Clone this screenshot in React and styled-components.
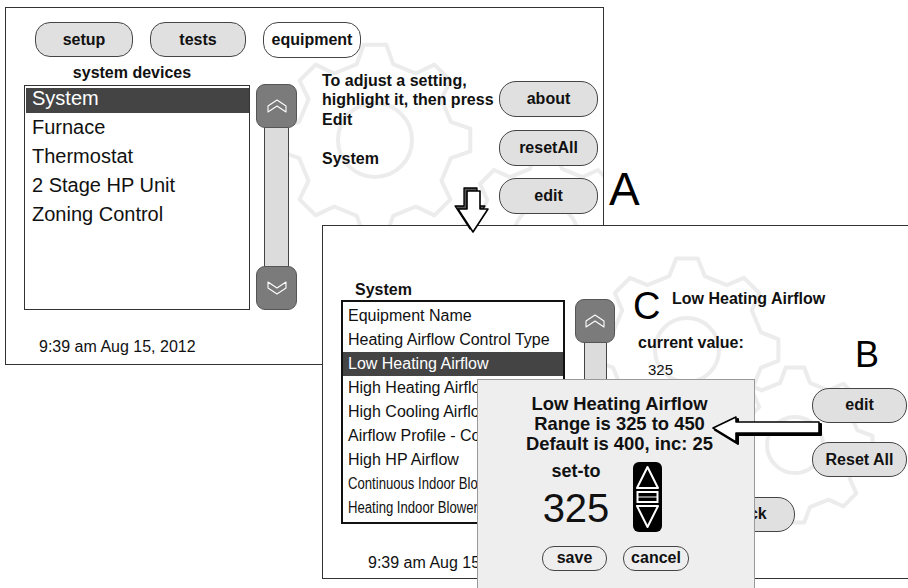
import React from 'react'
import styled, { createGlobalStyle } from 'styled-components'

const GlobalStyle = createGlobalStyle`
  html, body {
    margin: 0;
    padding: 0;
    background: #fff;
    overflow: hidden;
  }
  body {
    font-family: "Liberation Sans", Arial, sans-serif;
    color: #111;
  }
`

const Canvas = styled.div`
  position: relative;
  width: 908px;
  height: 588px;
  overflow: hidden;
  background: #fff;
`

// a thermostat screen, laid over the canvas like a window on a desktop
const Screen = styled.div`
  position: absolute;
  left: ${p => p.$x}px;
  top: ${p => p.$y}px;
  width: ${p => p.$w}px;
  height: ${p => p.$h}px;
  z-index: ${p => p.$z};
  box-sizing: border-box;
  border: 1px solid #333;
  background: #fff;
  overflow: hidden;
  display: flex;
  flex-direction: column;
`

const Watermark = styled.svg`
  position: absolute;
  left: 0;
  top: 0;
  width: 100%;
  height: 100%;
  z-index: -1;
  pointer-events: none;
`

const Pill = styled.div`
  box-sizing: border-box;
  width: ${p => p.$w}px;
  height: ${p => p.$h}px;
  border: 1px solid #454545;
  border-radius: ${p => p.$r || 15}px;
  background: ${p => p.$bg || '#e0e0e0'};
  display: flex;
  align-items: center;
  justify-content: center;
  font-weight: 700;
  font-size: 16px;
  white-space: nowrap;
  grid-column: ${p => p.$col || 'auto'};
  grid-row: ${p => p.$row || 'auto'};
`

const TabRow = styled.div`
  display: flex;
  gap: 17px;
  margin: 14px 0 0 29px;
`

const Body = styled.div`
  display: flex;
  align-items: flex-start;
  margin-top: ${p => p.$top || 0}px;
`

const ListColumn = styled.div`
  margin: ${p => p.$top}px 0 0 18px;
  width: ${p => p.$w}px;
  flex: none;
`

const ListTitle = styled.div`
  font-weight: 700;
  font-size: 16px;
  line-height: 18px;
  text-align: ${p => (p.$center ? 'center' : 'left')};
  padding: ${p => (p.$center ? '0 10px 0 0' : '0 0 0 14px')};
  margin-bottom: ${p => p.$gap}px;
`

const ListBox = styled.div`
  box-sizing: border-box;
  height: ${p => p.$h}px;
  border: ${p => p.$border}px solid ${p => (p.$border > 1 ? '#111' : '#333')};
  padding: 2px 0 0 ${p => (p.$border > 1 ? 0 : 1)}px;
  overflow: hidden;
`

const DeviceItem = styled.div`
  height: 25px;
  margin-bottom: 4px;
  padding-left: 6px;
  font-size: 20px;
  line-height: 21px;
  background: ${p => (p.$selected ? '#444' : 'transparent')};
  color: ${p => (p.$selected ? '#fff' : '#111')};
`

const SettingItem = styled.div`
  height: 24px;
  padding-left: 5px;
  font-size: 16px;
  line-height: 24px;
  white-space: nowrap;
  overflow: hidden;
  background: ${p => (p.$selected ? '#444' : 'transparent')};
  color: ${p => (p.$selected ? '#fff' : '#111')};
`

// the long labels are set in a narrow face on the device
const NarrowText = styled.span`
  display: inline-block;
  transform: scaleX(0.82);
  transform-origin: left center;
`

const ScrollBar = styled.div`
  flex: none;
  margin: ${p => p.$top}px 0 0 ${p => p.$left}px;
  width: ${p => p.$w}px;
  height: 226px;
  display: flex;
  flex-direction: column;
  align-items: center;
`

const ScrollButton = styled.div`
  box-sizing: border-box;
  width: 100%;
  height: 44px;
  flex: none;
  background: #7b7b7b;
  border: 1px solid #555;
  border-radius: 9px;
  display: flex;
  align-items: center;
  justify-content: center;
`

const ScrollTrack = styled.div`
  box-sizing: border-box;
  width: ${p => p.$w}px;
  flex: 1;
  background: #dcdcdc;
  border: 1px solid #444;
  border-top: none;
  border-bottom: none;
`

const Hint = styled.div`
  flex: none;
  width: 177px;
  margin: 6.5px 0 0 25px;
  font-weight: 700;
  font-size: 16px;
  line-height: 19.5px;
  white-space: nowrap;
`

const HintName = styled.div`
  margin-top: 19.5px;
`

const SideButtons = styled.div`
  display: flex;
  flex-direction: column;
  gap: 12.5px;
  margin-top: 17px;
`

const DateLine = styled.div`
  margin-top: ${p => p.$top}px;
  padding-left: ${p => p.$left}px;
  font-size: 16px;
  line-height: 18px;
  white-space: nowrap;
`

const Detail = styled.div`
  display: flex;
  flex-direction: column;
  margin: 63.7px 0 0 23px;
`

const DetailText = styled.div`
  font-weight: ${p => (p.$plain ? 400 : 700)};
  font-size: ${p => (p.$plain ? 15 : 16)}px;
  line-height: 18px;
  margin-top: ${p => p.$top || 0}px;
  padding-left: ${p => p.$indent || 0}px;
  white-space: nowrap;
`

const ActionGrid = styled.div`
  display: grid;
  grid-template-columns: 93px 95px;
  grid-auto-rows: 35px;
  column-gap: 17px;
  row-gap: 19.5px;
  margin: 9.3px 0 0 64px;
`

const Popup = styled.div`
  position: absolute;
  left: 477px;
  top: 379px;
  width: 278px;
  height: 220px;
  z-index: 3;
  box-sizing: border-box;
  background: #eeeeee;
  border: 1px solid #9a9a9a;
  display: flex;
  flex-direction: column;
`

const PopupTitle = styled.div`
  padding: 13.8px 0 0 7px;
  text-align: center;
  font-weight: 700;
  font-size: 18.4px;
  line-height: 20px;
  white-space: nowrap;
`

const PopupMid = styled.div`
  display: flex;
  align-items: flex-start;
  margin-top: 7.2px;
  padding-left: 58px;
`

const ValueStack = styled.div`
  width: 80px;
  display: flex;
  flex-direction: column;
  align-items: center;
`

const SetTo = styled.div`
  font-weight: 700;
  font-size: 18px;
  line-height: 20px;
`

const BigValue = styled.div`
  margin-top: 7.4px;
  font-size: 40px;
  line-height: 40px;
`

const Spinner = styled.svg`
  margin: 1px 0 0 17px;
  flex: none;
`

const PopupButtons = styled.div`
  display: flex;
  gap: 16px;
  margin-top: 14px;
  padding-left: 64px;
`

const Letter = styled.div`
  position: absolute;
  left: ${p => p.$x}px;
  top: ${p => p.$y}px;
  z-index: 5;
  font-size: ${p => p.$size}px;
  line-height: ${p => p.$size}px;
  color: #000;
`

const Overlay = styled.svg`
  position: absolute;
  left: ${p => p.$x}px;
  top: ${p => p.$y}px;
  z-index: 4;
  overflow: visible;
`

const gearPath = (cx, cy, ro, ri, n) => {
  const s = (Math.PI * 2) / n
  const pts = []
  for (let i = 0; i < n; i++) {
    const a = i * s - Math.PI / 2
    ;[[a - s * 0.3, ri], [a - s * 0.15, ro], [a + s * 0.15, ro], [a + s * 0.3, ri]].forEach(([t, r]) => {
      pts.push(`${(cx + r * Math.cos(t)).toFixed(1)},${(cy + r * Math.sin(t)).toFixed(1)}`)
    })
  }
  return `M${pts.join(' L')} Z`
}

const Gear = ({ cx, cy, ro, ri, hole }) => (
  <g fill="none" stroke="#ececec" strokeWidth="4" strokeLinejoin="round">
    <path d={gearPath(cx, cy, ro, ri, 8)} />
    <circle cx={cx} cy={cy} r={hole} />
  </g>
)

const Chevron = ({ down }) => (
  <svg width="20" height="14" viewBox="0 0 20 14">
    <polygon
      points={down ? '1,1 1,7 10,13 19,7 19,1 10,7' : '1,13 1,7 10,1 19,7 19,13 10,7'}
      fill="none"
      stroke="#fff"
      strokeWidth="1.1"
      strokeLinejoin="round"
    />
  </svg>
)

const Scroller = ({ top, left, w, track }) => (
  <ScrollBar $top={top} $left={left} $w={w}>
    <ScrollButton><Chevron /></ScrollButton>
    <ScrollTrack $w={track} />
    <ScrollButton><Chevron down /></ScrollButton>
  </ScrollBar>
)

const devices = ['System', 'Furnace', 'Thermostat', '2 Stage HP Unit', 'Zoning Control']

const settings = [
  { label: 'Equipment Name' },
  { label: 'Heating Airflow Control Type' },
  { label: 'Low Heating Airflow', selected: true },
  { label: 'High Heating Airflow' },
  { label: 'High Cooling Airflow' },
  { label: 'Airflow Profile - Comfort' },
  { label: 'High HP Airflow' },
  { label: 'Continuous Indoor Blower Airflow', narrow: true },
  { label: 'Heating Indoor Blower Off Delay', narrow: true },
]

export default function App() {
  return (
    <Canvas>
      <GlobalStyle />

      <Screen $x={5} $y={7} $w={599} $h={358} $z={1}>
        <Watermark>
          <Gear cx={369} cy={132} ro={96} ri={78} hole={37} />
          <Gear cx={540} cy={228} ro={84} ri={69} hole={32} />
        </Watermark>
        <TabRow>
          <Pill $w={98} $h={35}>setup</Pill>
          <Pill $w={96} $h={35}>tests</Pill>
          <Pill $w={98} $h={36} $bg="#fff">equipment</Pill>
        </TabRow>
        <Body $top={6}>
          <ListColumn $top={0} $w={226}>
            <ListTitle $center $gap={3}>system devices</ListTitle>
            <ListBox $h={225} $border={1}>
              {devices.map((d, i) => (
                <DeviceItem key={d} $selected={i === 0}>{d}</DeviceItem>
              ))}
            </ListBox>
          </ListColumn>
          <Scroller top={20} left={6} w={41} track={25} />
          <Hint>
            To adjust a setting,<br />
            highlight it, then press<br />
            Edit
            <HintName>System</HintName>
          </Hint>
          <SideButtons>
            <Pill $w={99} $h={36} $r={17}>about</Pill>
            <Pill $w={99} $h={36} $r={17}>resetAll</Pill>
            <Pill $w={99} $h={36} $r={17}>edit</Pill>
          </SideButtons>
        </Body>
        <DateLine $top={27.7} $left={33}>9:39 am Aug 15, 2012</DateLine>
      </Screen>

      <Screen $x={322} $y={225} $w={620} $h={354} $z={2}>
        <Watermark>
          <Gear cx={364} cy={124} ro={92} ri={76} hole={32} />
          <Gear cx={472} cy={219} ro={78} ri={64} hole={28} />
        </Watermark>
        <Body>
          <ListColumn $top={54.7} $w={224}>
            <ListTitle $gap={1.3}>System</ListTitle>
            <ListBox $h={224} $border={2}>
              {settings.map(s => (
                <SettingItem key={s.label} $selected={s.selected}>
                  {s.narrow ? <NarrowText>{s.label}</NarrowText> : s.label}
                </SettingItem>
              ))}
            </ListBox>
          </ListColumn>
          <Scroller top={73} left={10} w={40} track={23} />
          <Detail>
            <DetailText $indent={34}>Low Heating Airflow</DetailText>
            <DetailText $top={26}>current value:</DetailText>
            <DetailText $top={9} $indent={10} $plain>325</DetailText>
            <ActionGrid>
              <Pill $w={95} $h={35} $r={17} $col={2} $row={1}>edit</Pill>
              <Pill $w={95} $h={35} $r={17} $col={2} $row={2}>Reset All</Pill>
              <Pill $w={93} $h={35} $r={17} $col={1} $row={3}>back</Pill>
            </ActionGrid>
          </Detail>
        </Body>
        <DateLine $top={21.7} $left={45}>9:39 am Aug 15, 2012</DateLine>
      </Screen>

      <Popup>
        <PopupTitle>
          Low Heating Airflow<br />
          Range is 325 to 450<br />
          Default is 400, inc: 25
        </PopupTitle>
        <PopupMid>
          <ValueStack>
            <SetTo>set-to</SetTo>
            <BigValue>325</BigValue>
          </ValueStack>
          <Spinner width="29" height="70" viewBox="0 0 29 70">
            <rect x="0" y="0" width="29" height="70" rx="6" fill="#000" />
            <polygon points="14.5,5 4,26 25,26" fill="none" stroke="#fff" strokeWidth="2" strokeLinejoin="round" />
            <rect x="4.5" y="30" width="20" height="10" fill="none" stroke="#fff" strokeWidth="2" />
            <line x1="4.5" y1="35" x2="24.5" y2="35" stroke="#fff" strokeWidth="1" />
            <polygon points="4,44 25,44 14.5,65" fill="none" stroke="#fff" strokeWidth="2" strokeLinejoin="round" />
          </Spinner>
        </PopupMid>
        <PopupButtons>
          <Pill $w={65} $h={25} $r={12} $bg="#eeeeee">save</Pill>
          <Pill $w={66} $h={25} $r={12} $bg="#eeeeee">cancel</Pill>
        </PopupButtons>
      </Popup>

      <Overlay $x={452} $y={184} width="40" height="52" viewBox="0 0 40 52">
        <polygon points="12,4 25,4 25,22 33,22 18,45 3,22 12,22" fill="#555" stroke="#000" strokeWidth="1.3" strokeLinejoin="round" />
        <polygon points="15,7 28,7 28,25 36,25 21,48 6,25 15,25" fill="#fff" stroke="#000" strokeWidth="1.6" strokeLinejoin="round" />
      </Overlay>

      <Overlay $x={708} $y={412} width="118" height="36" viewBox="0 0 118 36">
        <polygon points="7,18 30,7 30,12 113,12 113,23 30,23 30,32" fill="#000" stroke="#000" strokeWidth="2" strokeLinejoin="round" />
        <polygon points="5,16 28,5 28,10 111,10 111,21 28,21 28,30" fill="#fff" stroke="#000" strokeWidth="1.6" strokeLinejoin="round" />
      </Overlay>

      <Letter $x={609} $y={166} $size={46}>A</Letter>
      <Letter $x={855} $y={337} $size={36}>B</Letter>
      <Letter $x={633} $y={287} $size={38}>C</Letter>
    </Canvas>
  )
}
